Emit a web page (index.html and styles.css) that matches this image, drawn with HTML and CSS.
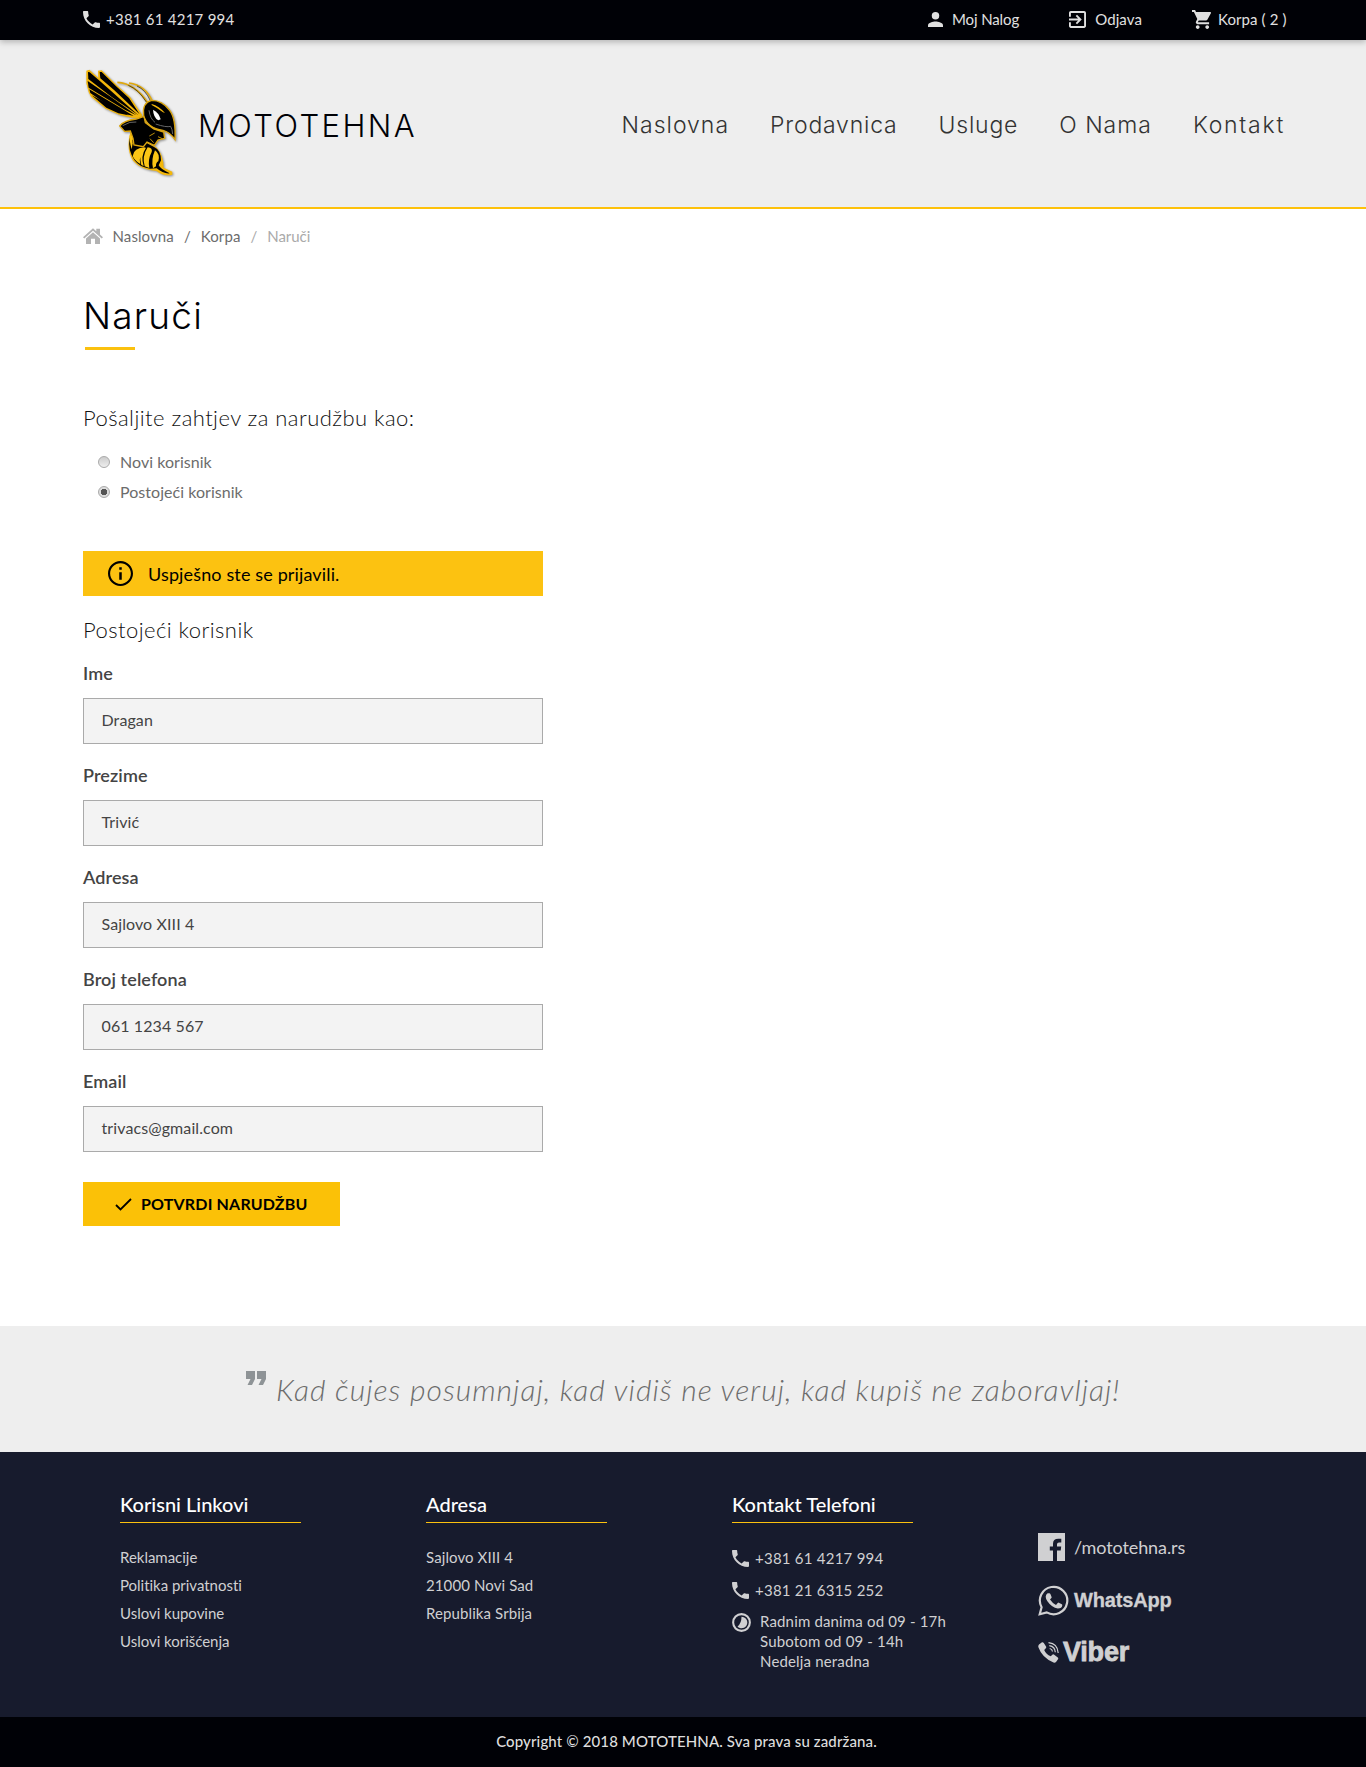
FILE: index.html
```html
<!DOCTYPE html>
<html lang="sr-Latn">
<head>
<meta charset="utf-8">
<title>Mototehna - Naruči</title>
<link rel="stylesheet" href="styles.css">
</head>
<body>
<svg class="sprite" width="0" height="0" aria-hidden="true">
  <symbol id="phone" viewBox="3 3 18 18"><path d="M6.620 10.790c1.440 2.830 3.760 5.140 6.590 6.590l2.200-2.200c.27-.27.67-.36 1.020-.24 1.120.37 2.330.57 3.570.57.55 0 1 .45 1 1V20c0 .55-.45 1-1 1-9.390 0-17-7.610-17-17 0-.55.45-1 1-1h3.500c.55 0 1 .45 1 1 0 1.250.2 2.450.57 3.570.11.35.03.74-.25 1.020l-2.200 2.200z"/></symbol>
</svg>

<div class="topbar">
  <div class="container topbar-row">
    <a class="top-link top-phone"><svg class="ico-phone"><use href="#phone"/></svg><span class="digits">+381 61 4217 994</span></a>
    <div class="top-links">
      <a class="top-link top-user"><svg class="ico-user" viewBox="4 4 16 16"><circle cx="12" cy="8" r="4"/><path d="M12 14C9.330 14 4 15.340 4 18V20H20V18C20 15.340 14.670 14 12 14Z"/></svg><span>Moj Nalog</span></a>
      <a class="top-link top-exit"><svg class="ico-exit" viewBox="3 3 18 18"><path d="M10.090 15.590L11.500 17l5-5-5-5-1.410 1.410L12.670 11H3v2h9.670l-2.580 2.590zM19 3H5c-1.110 0-2 .9-2 2v4h2V5h14v14H5v-4H3v4c0 1.100.89 2 2 2h14c1.100 0 2-.9 2-2V5c0-1.100-.9-2-2-2z"/></svg><span>Odjava</span></a>
      <a class="top-link top-cart"><svg class="ico-cart" viewBox="1 2 20 20"><path d="M7 18c-1.100 0-1.990.9-1.990 2S5.900 22 7 22s2-.9 2-2-.9-2-2-2zM1 2v2h2l3.600 7.590-1.350 2.450c-.16.28-.25.61-.25.960 0 1.100.9 2 2 2h12v-2H7.420c-.14 0-.25-.11-.25-.25l.03-.12.9-1.630h7.450c.75 0 1.410-.41 1.750-1.030l3.580-6.490c.08-.14.12-.31.12-.480 0-.55-.45-1-1-1H5.210l-.94-2H1zm16 16c-1.100 0-1.990.9-1.990 2s.89 2 1.990 2 2-.9 2-2-.9-2-2-2z"/></svg><span>Korpa ( 2 )</span></a>
    </div>
  </div>
</div>

<header class="header">
  <div class="container header-row">
    <a class="brand">
      <svg class="logo" viewBox="24 27 285 327">
        <g class="wing">
          <path class="gold" d="M34 32L43 29L70 54L69 32L80 31L128 78L166 112L202 166L196 174L170 173L132 164L92 146L48 110L41 97L34 70Z"/>
          <path d="M74 36L80 36L125 80L162 114L194 163L118 91L76 55Z"/>
          <path d="M39 36L44 37L78 66L190 166L110 111L40 57Z"/>
          <path d="M38 63L108 111L184 166L151 150L41 83Z"/>
          <path d="M43 88L142 147L176 168L150 162L100 137L46 99Z"/>
          <path d="M50 106L128 148L161 166L130 160L94 143Z"/>
        </g>
        <path class="gold-line" d="M127 67Q180 70 218 128M162 69Q212 76 232 124"/>
        <path class="black-line" d="M160 76Q190 88 214 126M186 78Q212 90 226 122"/>
        <path class="gold" d="M166 218Q152 268 174 302Q196 328 244 333Q266 350 292 344L292 335L266 323Q266 286 244 262L214 246L190 230Z"/>
        <path d="M164 235Q158 270 178 300Q194 322 225 326L245 325Q265 342 284 340Q258 329 251 316L258 301Q258 270 236 260L198 240L174 240Z"/>
        <path class="sun" d="M173 288Q176 264 210 262Q190 285 196 312Q178 302 173 288ZM218 262Q234 264 230 276Q218 298 223 324L209 319Q200 290 218 262ZM202 263L213 263Q196 288 206 318L199 315Q191 286 202 263ZM240 271Q256 282 250 304Q242 308 243 319L234 325Q228 298 240 271Z"/>
        <path class="outlined" d="M134 198Q145 182 184 177L207 169L211 188L236 207L266 216L269 235L249 240L238 256L216 246L205 260L177 255L174 235L166 213L149 214Z"/>
        <path class="sun" d="M164 224L171 230L173 250L170 268Q162 240 164 224Z"/>
        <path class="outlined" d="M206 166Q201 128 230 121Q262 121 284 151Q303 176 300 239Q286 217 264 211Q216 204 206 166Z"/>
        <path class="gold-line thin" d="M223 228L239 219M236 248L225 236M249 230L262 236"/>
        <path class="gold" d="M230 132Q252 138 270 159L264 157Q248 144 230 135Z"/>
        <path class="white" d="M234 149Q252 158 257 178L250 181Q235 172 234 149Z"/>
        <path class="shine" d="M242 192Q274 203 287 199Q292 208 293 222M222 151Q225 176 240 187M143 197Q166 183 184 186"/>
      </svg>
      <span class="brand-name">MOTOTEHNA</span>
    </a>
    <nav class="nav"><a>Naslovna</a><a>Prodavnica</a><a>Usluge</a><a>O Nama</a><a>Kontakt</a></nav>
  </div>
</header>

<main class="container main">
  <div class="crumbs">
    <svg class="ico-home" viewBox="0 0 20 16"><path d="M10 .2L13.300 3.300V.8H17V6.500L20 9.300L18.700 10.500L10 2.700L1.300 10.500L0 9.300ZM10 4.200L17 10.400V16H12V10.800H8V16H3V10.400Z"/></svg>
    <a>Naslovna</a><span class="sep">/</span><a>Korpa</a><span class="sep muted">/</span><span class="muted">Naruči</span>
  </div>
  <h1 class="title">Naruči</h1>
  <form class="form">
    <h2 class="subtitle">Pošaljite zahtjev za narudžbu kao:</h2>
    <div class="radios">
      <label class="radio"><span class="dot"></span>Novi korisnik</label>
      <label class="radio"><span class="dot on"></span>Postojeći korisnik</label>
    </div>
    <div class="alert"><svg class="ico-info" viewBox="2 2 20 20"><path d="M11 17h2v-6h-2v6zm1-15C6.480 2 2 6.480 2 12s4.480 10 10 10 10-4.480 10-10S17.520 2 12 2zm0 18.300c-4.580 0-8.300-3.720-8.300-8.300s3.720-8.300 8.300-8.300 8.300 3.720 8.300 8.300-3.720 8.300-8.300 8.300zM11 9h2V7h-2v2z"/></svg>Uspješno ste se prijavili.</div>
    <h2 class="subtitle form-heading">Postojeći korisnik</h2>
    <div class="field"><label class="label">Ime</label><div class="input">Dragan</div></div>
    <div class="field"><label class="label">Prezime</label><div class="input">Trivić</div></div>
    <div class="field"><label class="label">Adresa</label><div class="input">Sajlovo XIII 4</div></div>
    <div class="field"><label class="label">Broj telefona</label><div class="input">061 1234 567</div></div>
    <div class="field"><label class="label">Email</label><div class="input">trivacs@gmail.com</div></div>
    <button class="submit" type="button"><svg class="ico-check" viewBox="0 0 17 13"><path d="M1 7L5.500 11.500L16 1"/></svg>POTVRDI NARUDŽBU</button>
  </form>
</main>

<section class="quote">
  <svg class="ico-quote" viewBox="0 0 20 14"><path d="M0 0H9V8L6 14H1.500L4.500 8H0ZM11 0H20V8L17 14H12.500L15.500 8H11Z"/></svg><span>Kad čujes posumnjaj, kad vidiš ne veruj, kad kupiš ne zaboravljaj!</span>
</section>

<footer class="footer">
  <div class="col">
    <h3 class="col-title">Korisni Linkovi</h3>
    <ul class="list"><li>Reklamacije</li><li>Politika privatnosti</li><li>Uslovi kupovine</li><li>Uslovi korišćenja</li></ul>
  </div>
  <div class="col">
    <h3 class="col-title">Adresa</h3>
    <ul class="list address"><li>Sajlovo XIII 4</li><li>21000 Novi Sad</li><li>Republika Srbija</li></ul>
  </div>
  <div class="col">
    <h3 class="col-title">Kontakt Telefoni</h3>
    <div class="contact">
      <div class="tel"><svg class="ico-phone"><use href="#phone"/></svg><span class="digits">+381 61 4217 994</span></div>
      <div class="tel"><svg class="ico-phone"><use href="#phone"/></svg><span class="digits">+381 21 6315 252</span></div>
      <div class="hours"><svg class="ico-clock" viewBox="0 0 20 20"><circle class="ring" cx="10" cy="10" r="8.800"/><path d="M10 4A6 6 0 1 1 5.800 14.200Q10 11 10 4Z"/></svg><div>Radnim danima od 09 - 17h<br>Subotom od 09 - 14h<br>Nedelja neradna</div></div>
    </div>
  </div>
  <div class="col social">
    <a class="fb"><svg class="ico-fb" viewBox="0 0 27 28"><path d="M0 0H27V28H19V17.500H22.700L23.200 13.500H19V11.300Q19 9.500 21 9.500H23.300V5.800H20.300Q15 5.800 15 10.800V13.500H11.800V17.500H15V28H0Z"/></svg>/mototehna.rs</a>
    <a class="wa"><svg class="ico-wa" viewBox="0 0 31 31"><path class="ring" d="M1.700 29.300L3.600 22.200A13.700 13.700 0 1 1 8.700 27.400Z"/><path d="M9.600 8.300h1.800q.7 0 1 .7l1.200 2.900q.2.500-.2 1.100l-1.400 1.600q2.400 3.700 6 5.300l1.700-2q.5-.5 1.100-.2l3 1.500q.6.300.5 1q-.3 3.200-4.500 3.200q-6-.8-10.400-7.200q-3.500-5 .2-7.900Z"/></svg>WhatsApp</a>
    <a class="viber"><svg class="ico-viber" viewBox="0 0 21 21"><path d="M1 2.500L4 .3Q5 0 5.800 1L8.200 4.700Q8.500 5.700 7.600 6.500L6.200 7.900Q8 12 12.800 14.300L14.300 12.800Q15.200 12 16.200 12.700L19.800 15.400Q20.700 16.200 20 17.200L18 20Q17 21 15.500 20.500Q4 15.700.3 5Q0 3.500 1 2.500Z"/><path class="wave" d="M10.500.7Q19.500 1.500 20.200 11M11.300 3.600Q17 4.500 17.300 10.200M11.700 6.500Q14.200 7 14.500 9.500"/></svg>Viber</a>
  </div>
</footer>
<div class="copyright">Copyright © 2018 MOTOTEHNA. Sva prava su zadržana.</div>
</body>
</html>
```
FILE: styles.css
```css
* { box-sizing: border-box; }
body { margin: 0; background: #fff; color: #444; font: 400 15px/20px Lato, "Open Sans", sans-serif; letter-spacing: .1px; }
h1, h2, h3, ul { margin: 0; padding: 0; font-weight: 400; list-style: none; }
svg { display: block; flex: none; fill: currentColor; }
.sprite { position: absolute; }
.container { width: 1200px; margin: 0 auto; }
.digits { letter-spacing: .24px; }

.topbar { position: relative; height: 40px; background: #000106; color: #e0e0e0; box-shadow: 0 2px 6px rgba(0, 0, 0, .25); }
.topbar-row { display: flex; justify-content: space-between; padding-top: 9px; }
.top-link { display: flex; align-items: center; }
.top-links { display: flex; margin-right: -3.500px; }
.top-phone { gap: 6px; }
.ico-phone { width: 17px; height: 17px; }
.ico-user { width: 15px; height: 15px; }
.ico-exit { width: 17px; height: 17px; }
.ico-cart { width: 19px; height: 19px; }
.top-user, .top-exit { gap: 9px; margin-right: 50px; }
.top-user { letter-spacing: -.1px; }
.top-cart { gap: 7px; }

.header { height: 169px; background: #eee; border-bottom: 2px solid #fdc10a; }
.header-row { display: flex; justify-content: space-between; padding-top: 29px; }
.brand { display: flex; margin-left: -.5px; }
.logo { width: 95px; height: 109px; filter: drop-shadow(1px 1px 1px rgba(0, 0, 0, .4)); }
.logo path { fill: #000; }
.logo .gold { fill: #f3b70b; }
.logo .sun { fill: #fbc515; }
.logo .white { fill: #fff; }
.logo .gold-line { fill: none; stroke: #e0a90d; stroke-width: 5; }
.logo .thin { stroke-width: 2.500; }
.logo .black-line { fill: none; stroke: #211a05; stroke-width: 2; }
.logo .outlined { fill: #000; stroke: #dca50e; stroke-width: 4; }
.logo .shine { fill: none; stroke: #666; stroke-width: 3; }
.brand-name { margin: 37px 0 0 20.500px; color: #000106; font: 300 31px/40px Inter, sans-serif; letter-spacing: 2.450px; }
.nav { display: flex; gap: 41px; padding-top: 41px; font: 300 23px/30px Inter, sans-serif; letter-spacing: 1px; color: #333; }
.nav a:nth-child(2), .nav a:nth-child(3) { letter-spacing: .8px; }
.nav a:last-child { margin-right: -2px; letter-spacing: 1.750px; }

.main { height: 1117px; }
.crumbs { display: flex; align-items: center; padding-top: 17px; color: #6c6c6c; }
.ico-home { width: 20px; height: 16px; margin-right: 9.500px; color: #b3b3b3; }
.sep { margin: 0 10px; }
.muted { color: #aaa; letter-spacing: -.05px; }
.title { margin-top: 45px; color: #000106; font: 300 37px/50px Inter, sans-serif; letter-spacing: 1.200px; }
.title::after { content: ""; display: block; width: 50px; height: 3px; margin: 6px 0 0 1.500px; background: #fbc10f; }
.form { width: 460px; padding-top: 53px; }
.subtitle { color: #111; font-size: 22px; font-weight: 300; line-height: 30px; letter-spacing: .45px; }
.radios { display: grid; gap: 10px; padding: 19px 0 49px 15px; }
.radio { display: flex; align-items: center; gap: 10px; font-size: 16px; line-height: 20px; letter-spacing: .04px; color: #6c6c6c; }
.dot { width: 12px; height: 12px; border: 1px solid #aaa; border-radius: 50%; background: linear-gradient(#ccc, #eee); }
.dot.on { background: radial-gradient(#555 0 3px, #ddd 3.500px); }
.alert { display: flex; align-items: center; gap: 15px; height: 45px; padding-left: 25px; background: #fcc211; color: #000; font-size: 18px; letter-spacing: .14px; }
.ico-info { width: 25px; height: 25px; }
.form-heading { margin: 19px 0 15px; }
.field { margin-bottom: 18px; }
.label { display: block; height: 38px; font-size: 18px; font-weight: 600; line-height: 26px; color: #444; }
.input { height: 46px; padding: 11px 17.500px; border: 1px solid #aaa; background: #f3f3f3; font-size: 16px; }
.submit { display: flex; align-items: center; gap: 9px; width: 257px; height: 44px; margin-top: 30px; padding: 0 0 0 32px; border: 0; background: #fbc107; color: #000; font: 700 16px/20px Lato, sans-serif; letter-spacing: .17px; }
.ico-check { width: 17px; height: 13px; fill: none; stroke: #000; stroke-width: 1.800; }

.quote { display: flex; height: 126px; padding: 45px 0 0 246px; background: #eee; color: #6c6c6c; font: italic 300 30px/36px Lato, sans-serif; letter-spacing: 1.020px; white-space: nowrap; }
.ico-quote { width: 20px; height: 14px; margin-right: 10px; color: #8e9396; }

.footer { display: grid; grid-template-columns: repeat(4, 306px); height: 265px; padding: 40px 0 0 120px; background: #171b2d; color: #d0d0d2; }
.col-title { width: 181px; height: 31px; border-bottom: 1px solid #fbc10f; font-size: 20px; font-weight: 500; line-height: 25px; letter-spacing: 0; color: #fff; }
.list { padding-top: 20px; line-height: 28px; letter-spacing: -.02px; }
.address { letter-spacing: .1px; }
.contact { padding-top: 25px; letter-spacing: .16px; }
.tel { display: flex; align-items: center; gap: 6px; height: 20px; margin-bottom: 12px; }
.hours { display: flex; gap: 9px; margin-top: -1px; }
.ico-clock { width: 19px; height: 19px; margin-top: 2px; }
.ring { fill: none; stroke: currentColor; stroke-width: 2.200; }
.social { padding-top: 40px; letter-spacing: 0; }
.social a { display: flex; align-items: center; }
.fb { height: 30px; gap: 9px; font-size: 18px; letter-spacing: -.1px; }
.ico-fb { width: 27px; height: 28px; }
.wa { height: 32px; margin-top: 22px; gap: 5px; font: 700 20px/30px "Liberation Sans", sans-serif; letter-spacing: -.15px; -webkit-text-stroke: .3px; }
.ico-wa { width: 31px; height: 31px; }
.viber { height: 30px; margin-top: 21px; gap: 4px; font: 700 27px/30px "Liberation Sans", sans-serif; letter-spacing: -.2px; -webkit-text-stroke: .8px; }
.ico-viber { width: 21px; height: 21px; }
.wave { fill: none; stroke: currentColor; stroke-width: 1.200; }
.copyright { display: flex; justify-content: center; height: 50px; padding: 14px 0 0 7px; background: #000106; color: #ddd; font-weight: 500; letter-spacing: .12px; }
```
